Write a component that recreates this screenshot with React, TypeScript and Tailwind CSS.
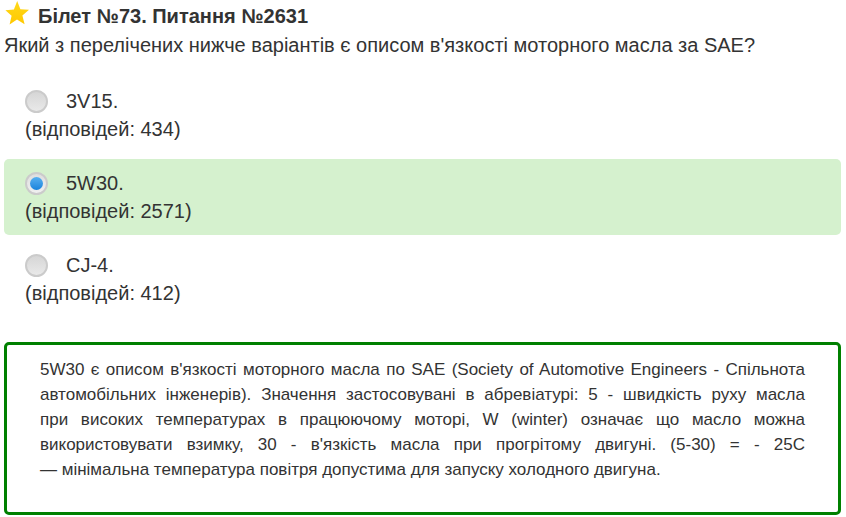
import { useState } from "react";

type Answer = { id: string; text: string; votes: number };

const answers: Answer[] = [
  { id: "a1", text: "3V15.", votes: 434 },
  { id: "a2", text: "5W30.", votes: 2571 },
  { id: "a3", text: "CJ-4.", votes: 412 },
];

function Star() {
  return (
    <svg viewBox="0 0 24 24" className="h-6 w-6 shrink-0" aria-hidden="true">
      <defs>
        <linearGradient id="star" x1="0" y1="0" x2="0" y2="1">
          <stop offset="0" stopColor="#ffd91a" />
          <stop offset="1" stopColor="#ffc800" />
        </linearGradient>
      </defs>
      <path
        d="M12.2 0 L15.4 8.2 L24 8.8 L17.4 14.6 L19.6 23.2 L12 18.6 L4.6 23.4 L6.6 14.8 L0.4 9.2 L8.9 8.4 Z"
        fill="url(#star)"
      />
    </svg>
  );
}

function AnswerRow({
  answer,
  checked,
  onSelect,
}: {
  answer: Answer;
  checked: boolean;
  onSelect: () => void;
}) {
  return (
    <label
      htmlFor={answer.id}
      className={`block cursor-pointer rounded-[5px] px-[21px] py-[10px] ${checked ? "bg-[#d5f1ce]" : ""}`}
    >
      <span className="flex items-center">
        <span className="mr-[18px] grid h-[23px] w-[23px] place-items-center">
          <input
            id={answer.id}
            type="radio"
            name="answer"
            checked={checked}
            onChange={onSelect}
            className="peer col-start-1 row-start-1 h-[23px] w-[23px] appearance-none rounded-full border-2 border-[#cbcbcb] bg-linear-to-b from-[#d6d6d6] to-[#e9e9e9] checked:from-[#dedede] checked:to-[#f0f0f0]"
          />
          <span className="pointer-events-none col-start-1 row-start-1 hidden h-[13px] w-[13px] rounded-full bg-linear-to-b from-[#55b0f0] to-[#1583dc] peer-checked:block" />
        </span>
        {answer.text}
      </span>
      <span className="block">(відповідей: {answer.votes})</span>
    </label>
  );
}

export default function App() {
  const [selected, setSelected] = useState("a2");

  return (
    <main className="bg-white pt-px pr-[5px] pb-[2px] pl-1 font-['Liberation_Sans',Arial,sans-serif] text-[20px] leading-[28px] text-[#333333]">
      <h1 className="flex items-start gap-[9px] px-px font-bold leading-[30px]">
        <Star />
        Білет №73. Питання №2631
      </h1>
      <fieldset>
        <legend>
          Який з перелічених нижче варіантів є описом в'язкості моторного масла за SAE?
        </legend>
        <div className="mt-[18px] flex flex-col gap-[6px]">
          {answers.map((answer) => (
            <AnswerRow
              key={answer.id}
              answer={answer}
              checked={selected === answer.id}
              onSelect={() => setSelected(answer.id)}
            />
          ))}
        </div>
      </fieldset>
      <section className="mt-[25px] rounded-[5px] border-3 border-[#008000] px-[33px] pt-[12px] pb-[30px] text-justify text-[17px] leading-[25px]">
        <p>
          5W30 є описом в'язкості моторного масла по SAE (Society of Automotive Engineers -
          Спільнота автомобільних інженерів). Значення застосовувані в абревіатурі: 5 - швидкість
          руху масла при&nbsp;високих температурах в працюючому моторі, W (winter) означає що масло
          можна використовувати взимку, 30 - в'язкість масла при прогрітому двигуні. (5-30) = - 25C
          —&nbsp;мінімальна температура повітря допустима для запуску холодного двигуна.
        </p>
      </section>
    </main>
  );
}
